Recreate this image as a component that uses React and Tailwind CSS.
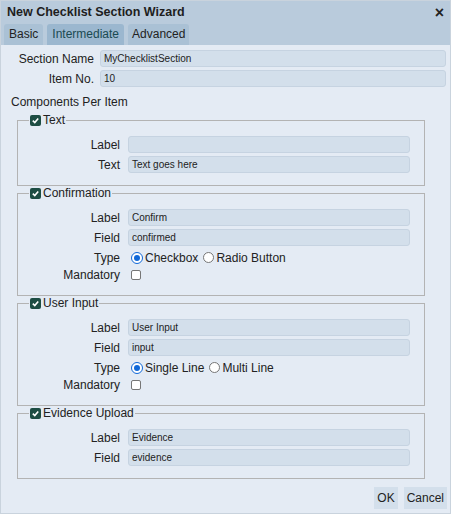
import React from "react";

const font = { fontFamily: '"Liberation Sans", Arial, sans-serif' };

function Check() {
  return (
    <span className="inline-flex items-center justify-center w-[11px] h-[11px] rounded-[2px] bg-[#1d4d43] mr-[2px]">
      <svg width="9" height="9" viewBox="0 0 10 10">
        <path d="M2 5.2 L4.2 7.3 L8 2.8" stroke="white" strokeWidth="1.8" fill="none" />
      </svg>
    </span>
  );
}

function Radio({ on }) {
  return on ? (
    <span className="inline-flex items-center justify-center w-[12px] h-[12px] rounded-full border-[1.5px] border-[#1068d8] bg-white">
      <span className="w-[6px] h-[6px] rounded-full bg-[#1068d8]" />
    </span>
  ) : (
    <span className="inline-block w-[11px] h-[11px] rounded-full border border-[#767676] bg-white" />
  );
}

function Input({ value }) {
  return (
    <div className="h-[17px] flex-1 rounded-[3px] bg-[#d3dfeb] border border-[#c6d3e1] px-[3px] text-[10px] leading-[15px] text-[#222]">
      {value}
    </div>
  );
}

function Row({ label, children, h = "h-[17px]" }) {
  return (
    <div className={`flex items-center ${h}`}>
      <div className="w-[110px] shrink-0 text-right pr-[8px] text-[12px] text-[#222]">{label}</div>
      <div className="flex-1 flex items-center pr-[14px]">{children}</div>
    </div>
  );
}

function Section({ title, children }) {
  return (
    <fieldset className="ml-[16px] mr-[25px] border border-[#b3b3b3] px-0 pt-[9px] pb-[12px]">
      <legend className="ml-[11px] px-[1px] h-[14px] flex items-center text-[12px] text-[#222]">
        <Check />
        {title}
      </legend>
      <div className="flex flex-col gap-[3px]">{children}</div>
    </fieldset>
  );
}

export default function App() {
  return (
    <div style={font} className="w-[451px] h-[514px] border border-[#c9d3dd] bg-[#e4ebf4] flex flex-col text-[#222]">
      <div className="bg-[#b9cbdc] pt-[3px]">
        <div className="flex items-center justify-between pl-[6px] pr-[6px] h-[17px]">
          <span className="font-bold text-[12.5px] text-[#1e1e1e]">New Checklist Section Wizard</span>
          <span className="text-[16px] font-bold leading-none">×</span>
        </div>
        <div className="flex gap-[4px] px-[3px] mt-[3px]">
          <div className="px-[5px] h-[21px] leading-[21px] rounded-t-[3px] bg-[#aac1d5] text-[12px]">Basic</div>
          <div className="px-[5px] h-[21px] leading-[21px] rounded-t-[3px] bg-[#9bb7cf] text-[12px] text-[#1a4a52]">Intermediate</div>
          <div className="px-[4px] h-[21px] leading-[21px] rounded-t-[3px] bg-[#aac1d5] text-[12px]">Advanced</div>
        </div>
      </div>
      <div className="flex-1 flex flex-col pt-[5px]">
        <div className="flex flex-col gap-[3px]">
          <div className="flex items-center h-[17px]">
            <div className="w-[93px] text-right text-[12px]">Section Name</div>
            <div className="flex-1 flex pl-[6px] pr-[4px]"><Input value="MyChecklistSection" /></div>
          </div>
          <div className="flex items-center h-[17px]">
            <div className="w-[93px] text-right text-[12px]">Item No.</div>
            <div className="flex-1 flex pl-[6px] pr-[4px]"><Input value="10" /></div>
          </div>
        </div>
        <div className="pl-[10px] mt-[8px] text-[12px] leading-[14px]">Components Per Item</div>
        <div className="mt-[4px] flex flex-col">
          <Section title="Text">
            <Row label="Label"><Input value="" /></Row>
            <Row label="Text"><Input value="Text goes here" /></Row>
          </Section>
          <Section title="Confirmation">
            <Row label="Label"><Input value="Confirm" /></Row>
            <Row label="Field"><Input value="confirmed" /></Row>
            <Row label="Type">
              <div className="flex items-center text-[12px] gap-[2px] pl-[3px]">
                <Radio on />
                <span className="mr-[3px]">Checkbox</span>
                <Radio />
                <span>Radio Button</span>
              </div>
            </Row>
            <div className="-mt-[3px]">
              <Row label="Mandatory">
                <span className="ml-[3px] inline-block w-[10px] h-[10px] rounded-[2px] border border-[#767676] bg-white" />
              </Row>
            </div>
          </Section>
          <Section title="User Input">
            <Row label="Label"><Input value="User Input" /></Row>
            <Row label="Field"><Input value="input" /></Row>
            <Row label="Type">
              <div className="flex items-center text-[12px] gap-[2px] pl-[3px]">
                <Radio on />
                <span className="mr-[3px]">Single Line</span>
                <Radio />
                <span>Multi Line</span>
              </div>
            </Row>
            <div className="-mt-[3px]">
              <Row label="Mandatory">
                <span className="ml-[3px] inline-block w-[10px] h-[10px] rounded-[2px] border border-[#767676] bg-white" />
              </Row>
            </div>
          </Section>
          <Section title="Evidence Upload">
            <Row label="Label"><Input value="Evidence" /></Row>
            <Row label="Field"><Input value="evidence" /></Row>
          </Section>
        </div>
        <div className="mt-auto flex justify-end gap-[6px] pr-[3px] pb-[4px]">
          <div className="h-[22px] px-[3px] leading-[22px] bg-[#d3dfeb] text-[12px]">OK</div>
          <div className="h-[22px] px-[3px] leading-[22px] bg-[#d3dfeb] text-[12px]">Cancel</div>
        </div>
      </div>
    </div>
  );
}
